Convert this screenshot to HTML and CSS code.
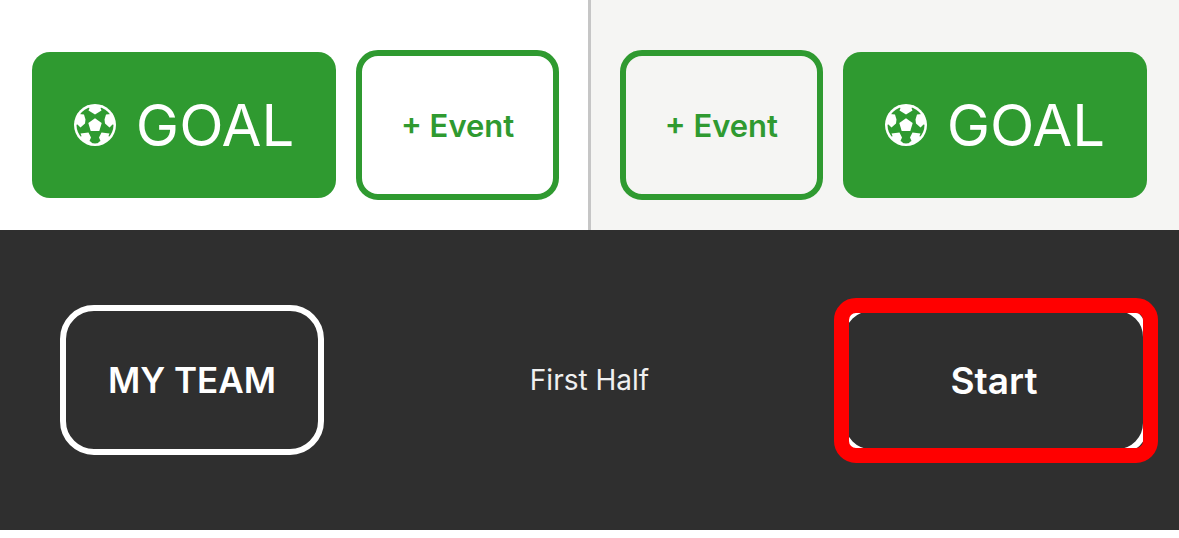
FILE: index.html
```
<!DOCTYPE html>

<html lang="en">
	<head>
		<meta charset="utf-8">
		<meta name="viewport" content="width=device-width, initial-scale=1">
		<title>First Half</title>
		<link rel="stylesheet" href="styles.css">
	</head>
	
	<body>
		<!--The ball is shared by both goal buttons-->
		<svg class="sprite" width="0" height="0" aria-hidden="true">
			<symbol id="ball" viewBox="0 0 42 42">
				<circle class="leather" cx="21" cy="21" r="21"/>
				<circle class="seam" cx="21" cy="21" r="18.500"/>
				<path class="leather" d="M21 14.200L27.700 19L25.300 27H16.700L14.300 19Z"/>
				<path class="leather" d="M13 1.500L15.500 4L14.500 6.500L21 10.500L27.500 6.500L26.500 4L29 1.500Z"/>
				<path class="leather" d="M32 10.500L37 10L35 7L39 10L41.500 21L38.500 20.500L35.500 23.500L31 19.500L30.500 15.500Z"/>
				<path class="leather" d="M10 10.500L5 10L7 7L3 10L0.500 21L3.500 20.500L6.500 23.500L11 19.500L11.500 15.500Z"/>
				<path class="leather" d="M27.500 28.500L35.500 29.500L34.500 32L36 34L27 40L24 38.500L26.500 37L25 33.500Z"/>
				<path class="leather" d="M14.500 28.500L6.500 29.500L7.500 32L6 34L15 40L18 38.500L15.500 37L17 33.500Z"/>
			</symbol>
		</svg>

		<div class="events">
			<div class="side home">
				<button class="goal"><svg class="ball" aria-hidden="true"><use href="#ball"/></svg>GOAL</button>
				<button class="event">+ Event</button>
			</div>
			<div class="side away">
				<button class="event">+ Event</button>
				<button class="goal"><svg class="ball" aria-hidden="true"><use href="#ball"/></svg>GOAL</button>
			</div>
		</div>
		
		<div class="clock">
			<button class="team">MY TEAM</button>
			<span class="period">First Half</span>
			<div class="highlight">
				<button class="start">Start</button>
			</div>
		</div>
	</body>
</html>
```
FILE: styles.css
```
* {
	box-sizing: border-box;
}

body {
	margin: 0;
	background-color: #ffffff;
	font-family: Inter, 'Liberation Sans', sans-serif;
}

button {
	margin: 0;
	padding: 0;
	border: 6px solid;
	background-color: transparent;
	font-family: inherit;
	font-weight: 600;
	cursor: pointer;
}

.sprite {
	position: absolute;
}

/*Goal and event buttons for each team*/
.events {
	display: flex;
}

.side {
	flex: 1;
	display: grid;
	align-items: center;
	gap: 20px;
	height: 230px;
}

.home {
	grid-template-columns: 3fr 2fr;
	padding: 20px 29px 0px 32px;
	border-right: 3px solid #c6c6c6;
}

.away {
	grid-template-columns: 2fr 3fr;
	padding: 20px 32px 0px 29px;
	background-color: #f5f5f3;
}

.goal {
	display: flex;
	align-items: center;
	justify-content: center;
	gap: 20px;
	height: 146px;
	border: none;
	border-radius: 18px;
	background-color: #2f9a30;
	color: #ffffff;
	font-size: 58px;
	font-weight: 400;
}

.ball {
	width: 42px;
	height: 42px;
}

.leather {
	fill: #ffffff;
}

.seam {
	fill: #2f9a30;
}

.event {
	height: 150px;
	border-color: #2f9a30;
	border-radius: 22px;
	color: #2f9a30;
	font-size: 31px;
}

/*Period controls*/
.clock {
	display: grid;
	grid-template-columns: 1fr auto 1fr;
	align-items: center;
	height: 300px;
	padding: 0px 30px;
	background-color: #2f2f2f;
	color: #ffffff;
}

.team, .start {
	height: 150px;
	border-color: #ffffff;
	border-radius: 34px;
	color: #ffffff;
	font-size: 36px;
}

.team {
	width: 264px;
	margin-left: 30px;
	font-size: 35px;
}

.start {
	width: 310px;
	border-radius: 32px;
	font-size: 37px;
}

.period {
	color: #f0f0f0;
	font-size: 28px;
}

.highlight {
	position: relative;
	justify-self: end;
}

/*Red marker drawn over the start button*/
.highlight::after {
	content: "";
	position: absolute;
	top: -7px;
	right: -9px;
	bottom: -8px;
	left: -5px;
	border: 15px solid #ff0000;
	border-radius: 22px;
	pointer-events: none;
}
```
